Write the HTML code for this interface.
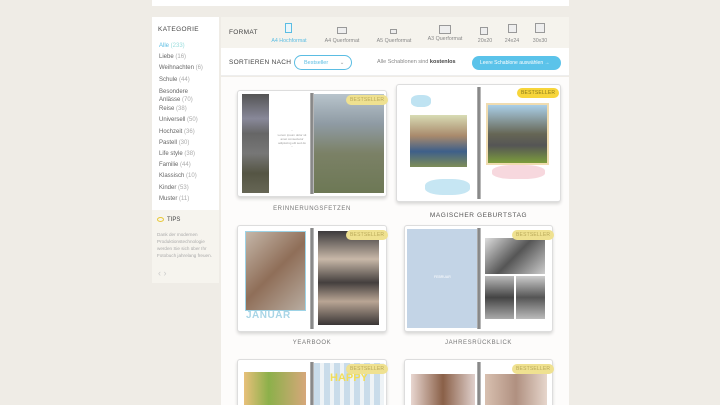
<!DOCTYPE html><html><head><meta charset="utf-8"><style>
*{margin:0;padding:0;box-sizing:border-box}
html{width:720px;height:405px;overflow:hidden}
body{width:720px;height:405px;overflow:hidden;background:#efece6;font-family:"Liberation Sans",sans-serif;position:relative;color:#555}
.a{position:absolute}
.book{position:absolute;background:#fff;border:1px solid #ddd;border-radius:3px;box-shadow:0 2px 3px rgba(0,0,0,.15)}
.pg{position:absolute;top:3px;bottom:3px}
.spine{position:absolute;top:2px;bottom:2px;width:4px;background:linear-gradient(90deg,#bbb,#777,#ccc)}
.best{position:absolute;background:#efe190;color:#b9a95a;font-size:5px;border-radius:6px;padding:2px 4px;letter-spacing:.2px}
.lab{position:absolute;font-size:6px;letter-spacing:.6px;color:#777;text-align:center}
.cat div{font-size:6px;color:#666;height:11.2px}
.cat span{color:#aaa}
.fmt{position:absolute;top:38px;font-size:5.3px;color:#888;text-align:center}
.ic{position:absolute;border:1.2px solid #999;background:#eee}
</style></head><body>
<div class="a" style="left:152px;top:0;width:417px;height:6px;background:#fff"></div>
<div class="a" style="left:152px;top:17px;width:67px;height:193px;background:#fff"></div>
<div class="a" style="left:152px;top:210px;width:67px;height:73px;background:#f6f4ee"></div>
<div class="a" style="left:158px;top:26px;font-size:6.5px;letter-spacing:.4px;color:#444">KATEGORIE</div>
<div class="a cat" style="left:159px;top:43px">
<div style="color:#5bbde3">Alle <span style="color:#9dd">(233)</span></div>
<div>Liebe <span>(16)</span></div><div>Weihnachten <span>(6)</span></div><div>Schule <span>(44)</span></div>
<div style="height:18.5px;line-height:8px">Besondere<br>Anlässe <span>(70)</span></div>
<div>Reise <span>(38)</span></div><div>Universell <span>(50)</span></div><div>Hochzeit <span>(36)</span></div><div>Pastell <span>(30)</span></div><div>Life style <span>(38)</span></div><div>Familie <span>(44)</span></div><div>Klassisch <span>(10)</span></div><div>Kinder <span>(53)</span></div><div>Muster <span>(11)</span></div></div>
<div class="a" style="left:157px;top:217px;width:7px;height:5px;border:1px solid #e8c93a;border-radius:50%"></div>
<div class="a" style="left:167px;top:217px;font-size:6px;color:#444">TIPS</div>
<div class="a" style="left:157px;top:231px;width:60px;font-size:4.6px;line-height:7px;color:#aaa">Dank der modernen Produktionstechnologie werden Sie sich über Ihr Fotobuch jahrelang freuen.</div>
<div class="a" style="left:158px;top:268px;font-size:9px;color:#ccc">‹ ›</div>
<div class="a" style="left:221px;top:17px;width:348px;height:31px;background:#f5f3ed"></div>
<div class="a" style="left:221px;top:48px;width:348px;height:28px;background:#fff;border-bottom:1px solid #eee"></div>
<div class="a" style="left:221px;top:77px;width:348px;height:328px;background:#fdfcfb"></div>
<div class="a" style="left:229px;top:29px;font-size:6.5px;color:#444;letter-spacing:.3px">FORMAT</div>
<div class="ic" style="left:285px;top:23px;width:7px;height:10px;border-color:#5bbde3;background:#eaf6fb"></div>
<div class="fmt" style="left:266px;width:46px;color:#5bbde3">A4 Hochformat</div>
<div class="ic" style="left:337px;top:27px;width:10px;height:7px"></div><div class="fmt" style="left:318px;width:48px">A4 Querformat</div>
<div class="ic" style="left:390px;top:29px;width:7px;height:5px"></div><div class="fmt" style="left:370px;width:48px">A5 Querformat</div>
<div class="ic" style="left:439px;top:25px;width:12px;height:9px"></div><div class="fmt" style="left:421px;top:36px;width:48px">A3 Querformat</div>
<div class="ic" style="left:480px;top:27px;width:8px;height:8px"></div><div class="fmt" style="left:474px;width:22px">20x20</div>
<div class="ic" style="left:508px;top:24px;width:9px;height:9px"></div><div class="fmt" style="left:501px;width:22px">24x24</div>
<div class="ic" style="left:535px;top:23px;width:10px;height:10px"></div><div class="fmt" style="left:529px;width:22px">30x30</div>
<div class="a" style="left:229px;top:59px;font-size:6.5px;color:#444;letter-spacing:.3px">SORTIEREN NACH</div>
<div class="a" style="left:294px;top:55px;width:58px;height:15px;border:1px solid #5bbde3;border-radius:8px;font-size:5.5px;color:#5bbde3;padding:4px 0 0 9px">Bestseller <span style="color:#999;margin-left:10px">⌄</span></div>
<div class="a" style="left:377px;top:59px;font-size:5.5px;color:#888">Alle Schablonen sind <b style="color:#444">kostenlos</b></div>
<div class="a" style="left:472px;top:56px;width:89px;height:14px;background:#5bc3ea;border-radius:7px;font-size:5px;color:#fff;padding:4px 0 0 8px">Leere Schablone auswählen →</div>

<div class="book" style="left:237px;top:90px;width:150px;height:107px">
<div class="pg" style="left:4px;width:27px;top:3px;background:linear-gradient(#555,#889 25%,#666 40%,#777 60%,#554 80%,#665)"></div>
<div class="a" style="left:38px;top:38px;width:32px;font-size:3px;color:#999;text-align:center;line-height:4px">”<br>Lorem ipsum dolor sit amet consectetur adipiscing elit sed do<br>”</div>
<div class="pg" style="left:76px;width:70px;background:linear-gradient(#b8c4cc,#8f9ba4 30%,#7b8166 60%,#6d7855)"></div>
<div class="spine" style="left:72px"></div><div class="best" style="left:108px;top:4px">BESTSELLER</div></div>
<div class="lab" style="left:237px;top:206px;width:150px">ERINNERUNGSFETZEN</div>

<div class="book" style="left:396px;top:84px;width:165px;height:118px">
<div class="a" style="left:14px;top:10px;width:20px;height:12px;background:#bfe3f2;border-radius:40%"></div>
<div class="a" style="left:13px;top:30px;width:57px;height:52px;background:linear-gradient(#d8dcb4,#a98a6c 40%,#3e5f8a 70%,#7e8e58)"></div>
<div class="a" style="left:28px;top:94px;width:45px;height:16px;background:#c6e6f3;border-radius:40%"></div>
<div class="a" style="left:89px;top:18px;width:63px;height:62px;background:linear-gradient(#aacfe8,#665 50%,#555 70%,#7c9c3c);border:2px solid #f0dcb0"></div>
<div class="a" style="left:95px;top:80px;width:53px;height:14px;background:#f7d8de;border-radius:40%"></div>
<div class="spine" style="left:80px"></div><div class="best" style="left:120px;top:3px;background:#f7d53a;color:#8a7a1a">BESTSELLER</div></div>
<div class="lab" style="left:396px;top:212px;width:165px;font-size:6.5px;color:#555">MAGISCHER GEBURTSTAG</div>

<div class="book" style="left:237px;top:225px;width:150px;height:107px">
<div class="a" style="left:7px;top:5px;width:61px;height:80px;background:linear-gradient(135deg,#c4b6a8,#8f6e58 50%,#b8aca0);border:1px solid #9dd3e6"></div>
<div class="a" style="left:8px;top:84px;font-size:10px;font-weight:bold;color:#a9d5e6;letter-spacing:.5px">JANUAR</div>
<div class="a" style="left:80px;top:5px;width:61px;height:94px;background:linear-gradient(#3c3a3c,#c8b8a8 30%,#443f3e 55%,#b9a594 75%,#3a3636)"></div>
<div class="spine" style="left:72px"></div><div class="best" style="left:108px;top:4px">BESTSELLER</div></div>
<div class="lab" style="left:237px;top:340px;width:150px">YEARBOOK</div>

<div class="book" style="left:404px;top:225px;width:149px;height:107px">
<div class="pg" style="left:2px;width:70px;background:#c3d4e6"></div>
<div class="a" style="left:29px;top:49px;font-size:3.5px;color:#fff">FEBRUAR</div>
<div class="a" style="left:80px;top:12px;width:60px;height:36px;background:linear-gradient(135deg,#ddd,#555 50%,#ccc)"></div>
<div class="a" style="left:80px;top:50px;width:29px;height:43px;background:linear-gradient(#bbb,#444,#aaa)"></div>
<div class="a" style="left:111px;top:50px;width:29px;height:43px;background:linear-gradient(#ccc,#555,#bbb)"></div>
<div class="spine" style="left:72px"></div><div class="best" style="left:107px;top:4px">BESTSELLER</div></div>
<div class="lab" style="left:404px;top:340px;width:149px">JAHRESRÜCKBLICK</div>

<div class="book" style="left:237px;top:359px;width:150px;height:46px;border-bottom:none;border-radius:3px 3px 0 0">
<div class="a" style="left:6px;top:12px;width:62px;height:34px;background:linear-gradient(90deg,#e8c07a,#8cb04a 40%,#d6a77a)"></div>
<div class="a" style="left:76px;top:3px;width:70px;height:43px;background:repeating-linear-gradient(90deg,#c9dcea 0 6px,#eef3f6 6px 10px)"></div>
<div class="a" style="left:92px;top:12px;font-size:11px;font-weight:bold;color:#f1dd5a">HAPPY</div>
<div class="a" style="left:72px;top:2px;bottom:0;width:4px;background:linear-gradient(90deg,#bbb,#777,#ccc)"></div><div class="best" style="left:108px;top:4px">BESTSELLER</div></div>
<div class="book" style="left:404px;top:359px;width:149px;height:46px;border-bottom:none;border-radius:3px 3px 0 0">
<div class="a" style="left:6px;top:14px;width:64px;height:32px;background:linear-gradient(90deg,#e8d6d0,#8a6048 50%,#e0d0cc)"></div>
<div class="a" style="left:80px;top:14px;width:62px;height:32px;background:linear-gradient(90deg,#d8c0b0,#b09080,#e6d6cc)"></div>
<div class="a" style="left:72px;top:2px;bottom:0;width:4px;background:linear-gradient(90deg,#bbb,#777,#ccc)"></div><div class="best" style="left:107px;top:4px">BESTSELLER</div></div>
</body></html>
